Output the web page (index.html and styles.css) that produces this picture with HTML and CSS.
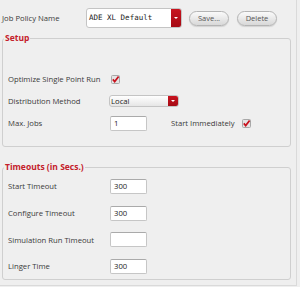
FILE: index.html
```html
<!DOCTYPE html>
<html lang="en">
<head>
    <meta charset="UTF-8">
    <title>Job Policy</title>
    <link rel="stylesheet" href="styles.css">
</head>
<body>
    <div class="page">
        <div class="top-row">
            <span class="top-label">Job Policy Name</span>
            <div class="combo">
                <span class="combo-text">ADE XL Default</span>
                <span class="drop-btn"><span class="arrow"></span></span>
            </div>
            <button class="pill">Save...</button>
            <button class="pill">Delete</button>
        </div>

        <fieldset class="group setup">
            <legend>Setup</legend>
            <div class="row">
                <span class="label">Optimize Single Point Run</span>
                <span class="check">
                    <svg width="9" height="9" viewBox="0 0 9 9"><rect x="0.5" y="0.5" width="8" height="8" rx="1" fill="#e4e4e4" stroke="#a8a8a8"/><path d="M1.8 4.4 L3.7 6.6 L7.6 1.6" fill="none" stroke="#c8101c" stroke-width="1.7"/></svg>
                </span>
            </div>
            <div class="row">
                <span class="label">Distribution Method</span>
                <div class="select">
                    <span class="select-text">Local</span>
                    <span class="drop-btn"><span class="arrow"></span></span>
                </div>
            </div>
            <div class="row">
                <span class="label">Max. Jobs</span>
                <span class="field">1</span>
                <span class="label-inline">Start Immediately</span>
                <span class="check">
                    <svg width="9" height="9" viewBox="0 0 9 9"><rect x="0.5" y="0.5" width="8" height="8" rx="1" fill="#e4e4e4" stroke="#a8a8a8"/><path d="M1.8 4.4 L3.7 6.6 L7.6 1.6" fill="none" stroke="#c8101c" stroke-width="1.7"/></svg>
                </span>
            </div>
        </fieldset>

        <fieldset class="group timeouts">
            <legend>Timeouts (in Secs.)</legend>
            <div class="row tall">
                <span class="label">Start Timeout</span>
                <span class="field">300</span>
            </div>
            <div class="row tall">
                <span class="label">Configure Timeout</span>
                <span class="field">300</span>
            </div>
            <div class="row tall">
                <span class="label">Simulation Run Timeout</span>
                <span class="field"></span>
            </div>
            <div class="row tall">
                <span class="label">Linger Time</span>
                <span class="field">300</span>
            </div>
        </fieldset>
    </div>
</body>
</html>
```

FILE: styles.css
```css
* {
    margin: 0;
    padding: 0;
    box-sizing: border-box;
}
body {
    font-family: "Open Sans", "DejaVu Sans", sans-serif;
    font-size: 7.7px;
    color: #3a3a3a;
    background-color: #efefef;
    white-space: nowrap;
}
.page {
    width: 297px;
    height: 286px;
    border-right: 1px solid #dadada;
    border-bottom: 1px solid #dadada;
}
.top-row {
    display: flex;
    align-items: center;
    height: 32px;
    padding-left: 2px;
    padding-top: 4px;
}
.top-label {
    width: 84px;
}
.combo {
    display: flex;
    width: 96px;
    height: 20px;
    background-color: #fff;
    border: 1px solid #c4c4c4;
    border-radius: 3px;
    overflow: hidden;
}
.combo-text {
    flex: 1;
    font-family: "DejaVu Sans Mono", monospace;
    font-size: 7.5px;
    line-height: 18px;
    padding-left: 2px;
    color: #222;
}
.drop-btn {
    width: 10px;
    background: linear-gradient(#c8141f, #a50a14);
    display: flex;
    align-items: center;
    justify-content: center;
}
.arrow {
    width: 0;
    height: 0;
    border-left: 2px solid transparent;
    border-right: 2px solid transparent;
    border-top: 2px solid #fff;
}
.pill {
    font-family: "Open Sans", sans-serif;
    font-size: 7.5px;
    color: #555;
    width: 40px;
    height: 15px;
    margin-left: 7px;
    border: 1px solid #b4b4b4;
    border-radius: 8px;
    background: linear-gradient(#fafafa, #d8d8d8);
    box-shadow: 0 1px 1px rgba(0, 0, 0, 0.12);
}
.pill + .pill {
    margin-left: 8px;
}
.group {
    margin: 0 5px 0 2px;
    border: 1px solid #cfcfcf;
    border-radius: 3px;
    padding: 0 5px;
}
.group legend {
    color: #c4202a;
    font-weight: bold;
    font-size: 8.5px;
    line-height: 12px;
    padding: 0 1px;
    margin-left: -4px;
}
.setup {
    height: 115px;
    padding-top: 24px;
}
.timeouts {
    margin-top: 14px;
    height: 119px;
}
.row {
    display: flex;
    align-items: center;
    height: 22px;
}
.row.tall {
    height: 26.7px;
}
.label {
    width: 102px;
}
.check {
    display: flex;
    margin-left: 1px;
}
.select {
    display: flex;
    width: 70px;
    height: 12px;
    margin-left: -1px;
    border: 1px solid #c4c4c4;
    border-radius: 3px;
    overflow: hidden;
    background: linear-gradient(#ffffff, #e6e6e6);
}
.select-text {
    flex: 1;
    padding-left: 1px;
    line-height: 10px;
    color: #222;
}
.field {
    width: 37px;
    height: 15px;
    line-height: 13px;
    padding-left: 3px;
    background-color: #fff;
    border: 1px solid #c6c6c6;
    border-top-color: #aaa;
    border-radius: 2px;
    color: #222;
}
.label-inline {
    margin-left: 24px;
    width: 70px;
}
```
